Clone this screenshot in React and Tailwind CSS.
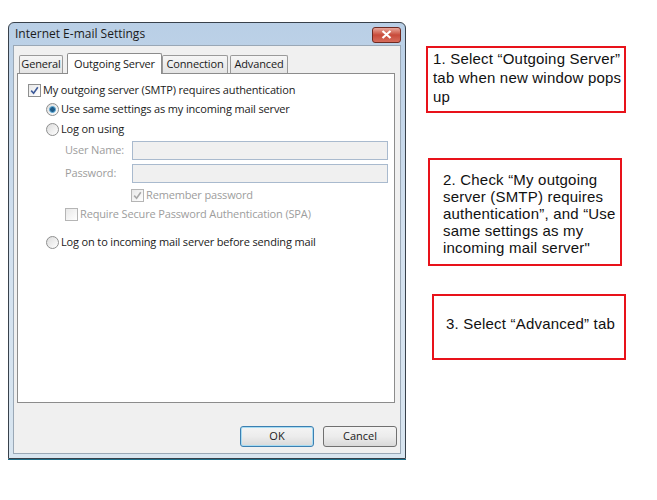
import React from "react";

const ui = { fontFamily: '"Open Sans", "Noto Sans", sans-serif' };
const note = { fontFamily: '"Liberation Sans", Arial, sans-serif' };

function Check({ checked, disabled }) {
  return (
    <span
      className={`w-[13px] h-[13px] border ${disabled ? "border-[#b5b5b5]" : "border-[#8e8f8f]"} bg-gradient-to-br from-[#e8e8e8] to-[#ffffff] flex items-center justify-center shrink-0`}
    >
      {checked && (
        <svg width="9" height="9" viewBox="0 0 9 9">
          <path d="M1.2 4.6 L3.6 7.2 L7.8 1.2" fill="none" stroke={disabled ? "#a8a8a8" : "#3d5a99"} strokeWidth="1.6" />
        </svg>
      )}
    </span>
  );
}

function Radio({ checked }) {
  return (
    <span className="w-[13px] h-[13px] rounded-full border border-[#8e8f8f] bg-gradient-to-br from-[#dcdcdc] to-[#ffffff] flex items-center justify-center shrink-0">
      {checked && (
        <span className="w-[7px] h-[7px] rounded-full bg-[#1f5a86] border border-[#5fb0dd]" />
      )}
    </span>
  );
}

function Tab({ children, active, className }) {
  return active ? (
    <div className={`h-[21px] border border-b-0 border-[#8c8c8c] bg-white flex items-center justify-center text-[#1a1a1a] -mb-px relative z-10 rounded-t-[2px] ${className}`}>
      {children}
    </div>
  ) : (
    <div className={`h-[18px] border border-b-0 border-[#9a9a9a] bg-gradient-to-b from-[#f6f6f6] to-[#e4e4e4] flex items-center justify-center text-[#1a1a1a] rounded-t-[2px] ${className}`}>
      {children}
    </div>
  );
}

function Note({ children, className }) {
  return (
    <div className={`border-2 border-[#e8121a] text-[15px] tracking-[0.2px] text-[#111] ${className}`} style={note}>
      {children}
    </div>
  );
}

export default function App() {
  return (
    <div className="w-[657px] h-[500px] bg-white flex">
      <div className="ml-[8px] mt-[22px] w-[398px] h-[437px] border border-[#38414b] rounded-t-[6px] bg-gradient-to-b from-[#b9cfe6] via-[#d3e1ef] to-[#d8e5f0] flex flex-col shadow-[0_1px_0_#1d6f8a]" style={ui}>
        <div className="h-[21px] flex items-center justify-between pl-[6px] pr-[4px]">
          <span className="text-[12px] text-[#1b1b1b]">Internet E-mail Settings</span>
          <span className="w-[29px] h-[16px] mt-[2px] rounded-[3px] border border-[#6e2a22] bg-gradient-to-b from-[#e7a79c] via-[#c84a3a] to-[#d66c5c] flex items-center justify-center">
            <svg width="11" height="9" viewBox="0 0 11 9">
              <path d="M1.5 1 L9.5 8 M9.5 1 L1.5 8" stroke="#ffffff" strokeWidth="2.2" />
            </svg>
          </span>
        </div>
        <div className="flex-1 mx-[4px] mb-[4px] mt-[1px] border border-[#9aa8b6] bg-[#f0f0f0] flex flex-col pt-[5px] px-[3px]">
          <div className="flex items-end pl-[2px] text-[11px] tracking-[-0.15px] h-[22px]">
            <Tab className="w-[44px]">General</Tab>
            <Tab active className="w-[95px] ml-[4px]">Outgoing Server</Tab>
            <Tab className="w-[66px]">Connection</Tab>
            <Tab className="w-[58px] ml-[2px]">Advanced</Tab>
          </div>
          <div className="h-[330px] mr-[2px] border border-[#8c8c8c] bg-white text-[11px] tracking-[-0.15px] text-[#1a1a1a] flex flex-col pt-[9px]">
            <div className="flex items-center gap-[2px] pl-[10px] h-[14px]">
              <Check checked />
              <span>My outgoing server (SMTP) requires authentication</span>
            </div>
            <div className="flex items-center gap-[2px] pl-[28px] h-[14px] mt-[5px]">
              <Radio checked />
              <span>Use same settings as my incoming mail server</span>
            </div>
            <div className="flex items-center gap-[2px] pl-[28px] h-[14px] mt-[6px]">
              <Radio />
              <span>Log on using</span>
            </div>
            <div className="flex items-center pl-[47px] mt-[5px] text-[#9d9d9d]">
              <span className="w-[67px]">User Name:</span>
              <div className="w-[256px] h-[19px] border border-[#a9bace] bg-[#f0f0f0]" />
            </div>
            <div className="flex items-center pl-[47px] mt-[4px] text-[#9d9d9d]">
              <span className="w-[67px]">Password:</span>
              <div className="w-[256px] h-[19px] border border-[#a9bace] bg-[#f0f0f0]" />
            </div>
            <div className="flex items-center gap-[2px] pl-[113px] h-[14px] mt-[5px] text-[#9d9d9d]">
              <Check checked disabled />
              <span>Remember password</span>
            </div>
            <div className="flex items-center gap-[2px] pl-[47px] h-[14px] mt-[5px] text-[#9d9d9d]">
              <Check disabled />
              <span>Require Secure Password Authentication (SPA)</span>
            </div>
            <div className="flex items-center gap-[2px] pl-[28px] h-[14px] mt-[14px]">
              <Radio />
              <span>Log on to incoming mail server before sending mail</span>
            </div>
          </div>
          <div className="flex justify-end gap-[9px] mt-[23px] mr-[0px] text-[11px] text-[#1a1a1a]">
            <div className="w-[74px] h-[21px] rounded-[3px] border border-[#3c7fb1] shadow-[inset_0_0_0_1px_#a8dcf2] bg-gradient-to-b from-[#f4f4f4] via-[#ececec] to-[#d9d9d9] flex items-center justify-center">OK</div>
            <div className="w-[74px] h-[21px] rounded-[3px] border border-[#707070] bg-gradient-to-b from-[#f4f4f4] via-[#ececec] to-[#d9d9d9] flex items-center justify-center">Cancel</div>
          </div>
        </div>
      </div>
      <div className="flex flex-col ml-[20px]">
        <Note className="mt-[46px] w-[200px] h-[67px] pl-[5px] pt-[1px] leading-[19px]">
          1. Select “Outgoing Server” tab when new window pops up
        </Note>
        <Note className="mt-[45px] ml-[2px] w-[194px] h-[108px] pl-[13px] pr-[4px] pt-[11px] leading-[17px]">
          2. Check “My outgoing server (SMTP) requires authentication”, and “Use same settings as my incoming mail server"
        </Note>
        <Note className="mt-[28px] ml-[6px] w-[194px] h-[66px] flex items-center pl-[12px] pb-[6px]">
          3. Select “Advanced” tab
        </Note>
      </div>
    </div>
  );
}
